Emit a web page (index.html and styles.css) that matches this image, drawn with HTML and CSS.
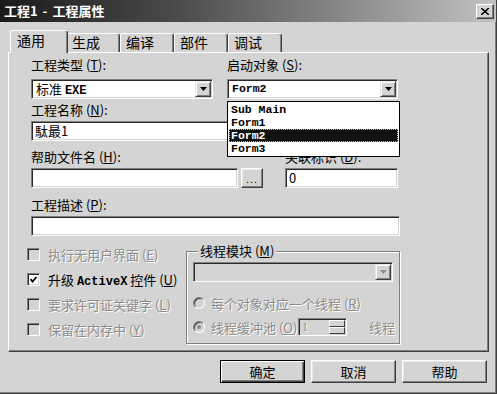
FILE: index.html
```html
<!DOCTYPE html>
<html>
<head>
<meta charset="utf-8">
<link rel="stylesheet" href="styles.css">
</head>
<body>
<div class="window">
  <div class="titlebar">
    <span class="title">工程1 - 工程属性</span>
    <span class="close"><svg width="8" height="7" viewBox="0 0 8 7"><path d="M0 0L8 7M8 0L0 7" stroke="#000" stroke-width="1.6"/></svg></span>
  </div>

  <div class="tabs">
    <div class="tab active">通用</div>
    <div class="tab">生成</div>
    <div class="tab">编译</div>
    <div class="tab">部件</div>
    <div class="tab">调试</div>
  </div>

  <div class="panel">
    <div class="row">
      <div class="label w-left">工程类型 (<u>T</u>):</div>
      <div class="label">启动对象 (<u>S</u>):</div>
    </div>
    <div class="row mt7">
      <div class="combo combo-type"><span class="combo-text">标准 <span class="mono">EXE</span></span><span class="drop"><svg width="7" height="4"><polygon points="0,0 7,0 3.5,4" fill="#000"/></svg></span></div>
      <div class="combo combo-start"><span class="combo-text mono-plain">Form2</span><span class="drop"><svg width="7" height="4"><polygon points="0,0 7,0 3.5,4" fill="#000"/></svg></span></div>
    </div>

    <div class="label mt4">工程名称 (<u>N</u>):</div>
    <div class="field field-name mt4">駄最1</div>

    <div class="row mt9">
      <div class="label w-help">帮助文件名 (<u>H</u>):</div>
      <div class="label">关联标识 (<u>D</u>):</div>
    </div>
    <div class="row mt4">
      <div class="field field-help"></div>
      <div class="btn btn-small">...</div>
      <div class="field field-id">0</div>
    </div>

    <div class="label mt10">工程描述 (<u>P</u>):</div>
    <div class="field field-desc mt4"></div>

    <div class="lower">
      <div class="checks">
        <div class="check disabled"><span class="box"></span><span>执行无用户界面 (<u>E</u>)</span></div>
        <div class="check"><span class="box on"><svg width="7" height="7"><polyline points="0.5,3 2.5,5.5 6.5,1" fill="none" stroke="#000" stroke-width="1.8"/></svg></span><span>升级 <span class="mono">ActiveX</span> 控件 (<u>U</u>)</span></div>
        <div class="check disabled"><span class="box"></span><span>要求许可证关键字 (<u>L</u>)</span></div>
        <div class="check disabled"><span class="box"></span><span>保留在内存中 (<u>Y</u>)</span></div>
      </div>

      <fieldset class="frame">
        <legend>线程模块 (<u>M</u>)</legend>
        <div class="combo combo-thread"><span class="combo-text"></span><span class="drop"><svg width="7" height="4"><polygon points="0,0 7,0 3.5,4" fill="#8c8c8c"/></svg></span></div>
        <div class="radio-row first disabled"><span class="radio"></span><span>每个对象对应一个线程 (<u>R</u>)</span></div>
        <div class="radio-row second disabled">
          <span class="radio on"></span>
          <span class="pool-label">线程缓冲池 (<u>O</u>)</span>
          <span class="spin"><span class="spin-text">1</span><span class="spin-btns"><span class="spin-btn"></span><span class="spin-btn"></span></span></span>
          <span class="pool-unit">线程</span>
        </div>
      </fieldset>
    </div>

    <div class="droplist">
      <div class="item">Sub Main</div>
      <div class="item">Form1</div>
      <div class="item selected">Form2</div>
      <div class="item">Form3</div>
    </div>
  </div>

  <div class="buttons">
    <div class="btn btn-default">确定</div>
    <div class="btn">取消</div>
    <div class="btn">帮助</div>
  </div>
</div>
</body>
</html>
```

FILE: styles.css
```css
* {box-sizing: border-box;}

body {
  margin: 0;
  background: #d4d4d4;
  font-family: "Noto Sans CJK SC", "Liberation Sans", sans-serif;
  font-size: 13px;
  color: #000;
}

u {text-decoration: underline;}

/* the dialog window */
.window {
  width: 497px;
  height: 394px;
  background: #d4d4d4;
  border-right: 1px solid #404040;
  border-bottom: 1px solid #404040;
  box-shadow: inset -1px -1px #808080;
}

.titlebar {
  height: 22px;
  display: flex;
  align-items: center;
  justify-content: space-between;
  padding: 0 2px 0 4px;
  background: linear-gradient(to right, #1a1a1a, #4a4a4a 35%, #c2c2c2);
}

.title {
  color: #fff;
  font-weight: bold;
  font-size: 13px;
  line-height: 22px;
  word-spacing: 2px;
}

.close {
  width: 18px;
  height: 15px;
  margin-top: 1px;
  display: flex;
  align-items: center;
  justify-content: center;
  background: #d4d4d4;
  border: 1px solid;
  border-color: #fff #404040 #404040 #fff;
  box-shadow: inset -1px -1px #808080;
}

/* tab strip */
.tabs {
  height: 30px;
  display: flex;
  align-items: flex-end;
  padding-left: 12px;
}

.tab {
  width: 54px;
  height: 19px;
  padding-left: 5px;
  font-size: 14px;
  line-height: 17px;
  border-top: 1px solid #fff;
  border-left: 1px solid #fff;
  border-right: 1px solid #404040;
  border-radius: 3px 3px 0 0;
  box-shadow: inset -1px 0 #808080;
}

.tab.active {
  position: relative;
  z-index: 2;
  width: 58px;
  height: 23px;
  margin: 0 -2px -1px -2px;
  padding-left: 6px;
  line-height: 19px;
  background: #d4d4d4;
}

/* tab page */
.panel {
  position: relative;
  width: 481px;
  height: 300px;
  margin-left: 8px;
  padding: 5px 0 0 22px;
  border: 1px solid;
  border-color: #fff #404040 #404040 #fff;
  box-shadow: inset -1px -1px #808080;
}

.row {display: flex;}
.mt4 {margin-top: 4px;}
.mt7 {margin-top: 7px;}
.mt9 {margin-top: 9px;}
.mt10 {margin-top: 10px;}

.label {
  height: 14px;
  line-height: 14px;
  white-space: nowrap;
}
.w-left {width: 196px;}
.w-help {width: 254px;}

.mono {
  font-family: "Liberation Mono", monospace;
  font-weight: bold;
  font-size: 12px;
}
.mono-plain {
  font-family: "Liberation Mono", monospace;
  font-weight: bold;
  font-size: 11.5px;
}

/* sunken fields */
.field, .combo {
  height: 20px;
  background: #fff;
  border: 1px solid;
  border-color: #808080 #fff #fff #808080;
  box-shadow: inset 1px 1px #2a2a2a, inset -1px -1px #d4d4d4;
  padding-left: 3px;
  line-height: 17px;
  white-space: nowrap;
}

.field-name {width: 209px;}
.field-help {width: 207px;}
.field-id {width: 113px; margin-left: 22px;}
.field-desc {width: 369px;}

.combo {
  display: flex;
  justify-content: space-between;
  padding: 1px;
}
.combo-text {padding-left: 3px; line-height: 16px;}
.combo-type {width: 182px; margin-right: 14px;}
.combo-start {width: 171px;}

.drop {
  width: 16px;
  height: 16px;
  display: flex;
  align-items: center;
  justify-content: center;
  background: #d4d4d4;
  border: 1px solid;
  border-color: #e8e8e8 #404040 #404040 #e8e8e8;
  box-shadow: inset 1px 1px #fff, inset -1px -1px #808080;
}

/* raised buttons */
.btn {
  width: 85px;
  height: 23px;
  display: flex;
  align-items: center;
  justify-content: center;
  background: #d4d4d4;
  border: 1px solid;
  border-color: #fff #404040 #404040 #fff;
  box-shadow: inset -1px -1px #808080, inset 1px 1px #e8e8e8;
}

.btn-small {
  width: 22px;
  height: 20px;
  margin-left: 3px;
  font-family: "Liberation Sans", sans-serif;
  font-size: 11px;
  letter-spacing: 1px;
  padding-top: 2px;
}

.btn-default {
  border: 1px solid #000;
  box-shadow: inset 1px 1px #fff, inset -1px -1px #404040, inset -2px -2px #808080;
}

/* checkboxes and thread frame */
.lower {
  display: flex;
  margin-top: 8px;
}

.checks {
  width: 159px;
  margin-left: -4px;
  padding-top: 3px;
  display: flex;
  flex-direction: column;
  gap: 11px;
}

.check {
  height: 14px;
  display: flex;
  align-items: center;
  white-space: nowrap;
}

.box {
  width: 13px;
  height: 13px;
  margin-right: 8px;
  flex: none;
  display: flex;
  align-items: center;
  justify-content: center;
  border: 1px solid;
  border-color: #808080 #fff #fff #808080;
  box-shadow: inset 1px 1px #2a2a2a, inset -1px -1px #d4d4d4;
}
.box.on {background: #fff;}

.disabled {
  color: #8c8c8c;
  text-shadow: 1px 1px #fff;
}

.frame {
  width: 214px;
  height: 100px;
  margin: 0;
  padding: 4px 4px 0 6px;
  border: 1px solid #808080;
  box-shadow: inset 1px 1px #fff, 1px 1px #fff;
}

.frame legend {
  margin-left: 5px;
  padding: 0 2px;
  height: 14px;
  line-height: 14px;
  background: #d4d4d4;
}

.combo-thread {
  width: 200px;
  background: #d4d4d4;
}

.radio-row {
  display: flex;
  align-items: center;
  white-space: nowrap;
}
.radio-row.first {height: 14px; margin-top: 14px;}
.radio-row.second {height: 18px; margin-top: 8px;}

.radio {
  width: 12px;
  height: 12px;
  margin: 0 6px 0 0;
  flex: none;
  border-radius: 50%;
  border: 1px solid;
  border-color: #808080 #fff #fff #808080;
  box-shadow: inset 1px 1px #404040;
  background: #d4d4d4;
  position: relative;
}
.radio.on::after {
  content: "";
  position: absolute;
  left: 3px;
  top: 3px;
  width: 4px;
  height: 4px;
  border-radius: 50%;
  background: #8c8c8c;
}

.pool-label {width: 87px; flex: none;}

.spin {
  width: 49px;
  height: 18px;
  display: flex;
  justify-content: space-between;
  border: 1px solid;
  border-color: #808080 #fff #fff #808080;
  box-shadow: inset 1px 1px #2a2a2a;
  padding: 1px;
}
.spin-text {
  padding-left: 2px;
  line-height: 15px;
  font-family: "Liberation Serif", serif;
  font-size: 12px;
}
.spin-btns {
  width: 16px;
  display: flex;
  flex-direction: column;
}
.spin-btn {
  flex: 1;
  border: 1px solid;
  border-color: #fff #404040 #404040 #fff;
}

.pool-unit {margin-left: auto;}

/* open list of the start-up object combo */
.droplist {
  position: absolute;
  left: 218px;
  top: 48px;
  width: 173px;
  height: 56px;
  padding: 1px;
  background: #fff;
  border: 1px solid #000;
  font-family: "Liberation Mono", monospace;
  font-weight: bold;
  font-size: 11.5px;
}

.item {
  height: 13px;
  line-height: 13px;
  padding-left: 2px;
}

.item.selected {
  background: #111;
  color: #fff;
  outline: 1px dotted #bbb;
  outline-offset: -1px;
}

/* bottom buttons */
.buttons {
  display: flex;
  justify-content: flex-end;
  gap: 6px;
  margin-top: 8px;
  padding-right: 9px;
}
```
